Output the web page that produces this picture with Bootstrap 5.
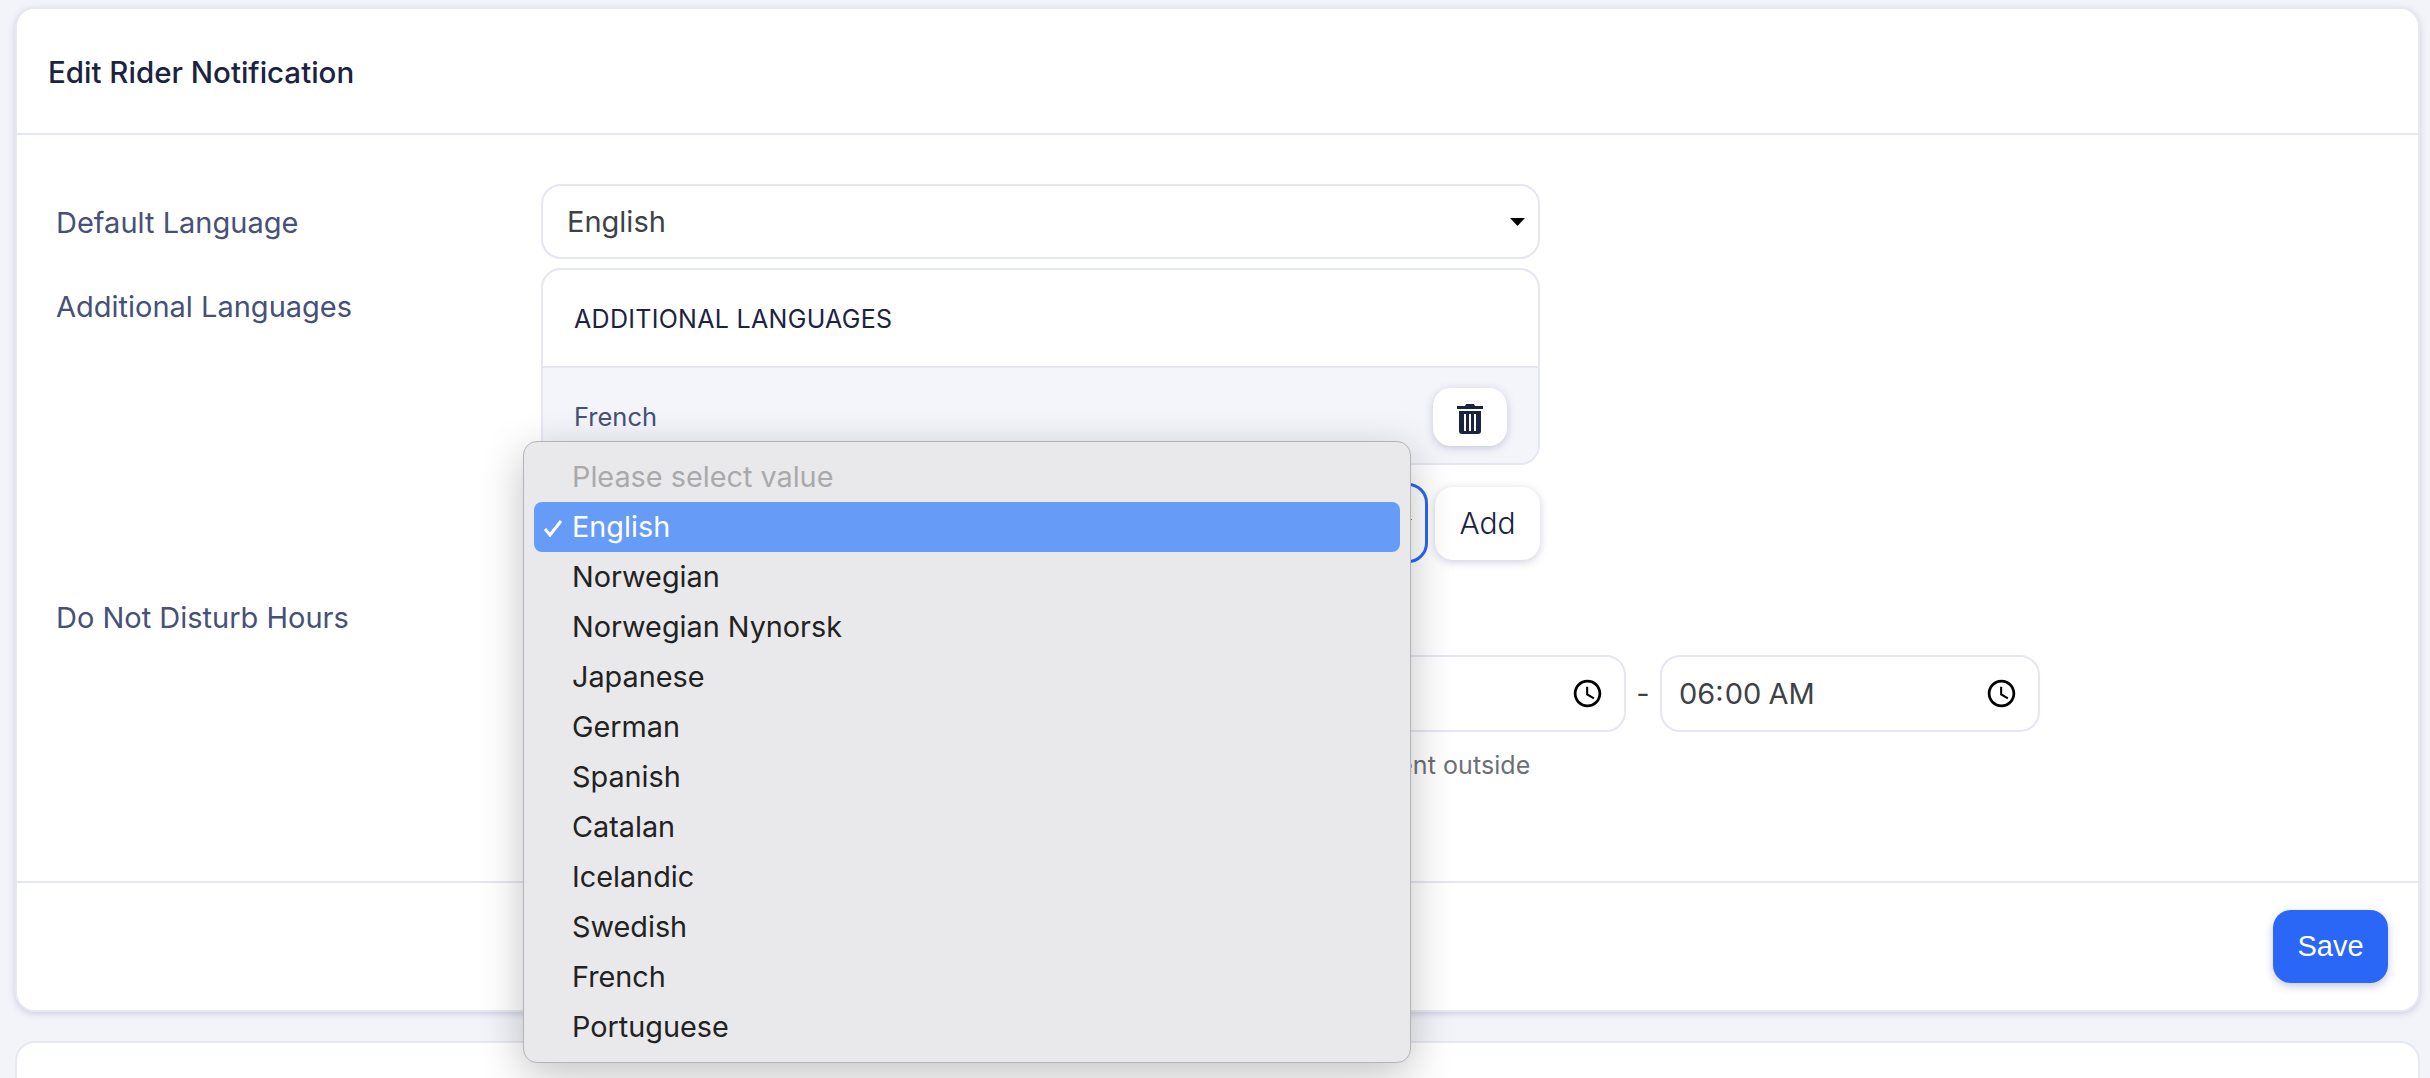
<!DOCTYPE html>
<html>
<head>
  <title>Edit Rider Notification</title>
  <link href="https://cdn.jsdelivr.net/npm/bootstrap@5.3.3/dist/css/bootstrap.min.css" rel="stylesheet">
  <style>
    html, body { height: 100%; overflow: hidden; }
    body {
      background-color: #f3f4f9;
      font-family: Inter, "Liberation Sans", sans-serif;
      padding: 7px 10px 0 15px;
    }
    .edit-card {
      height: 1005px;
      border: 2px solid #e6e8f2;
      border-radius: 20px;
      box-shadow: 0 2px 6px rgba(90, 90, 150, .25);
    }
    .edit-card .card-header {
      height: 126px;
      padding: 3px 0 0 31px;
      background: #fff;
      border-bottom: 2px solid #e4e7f2;
      font-size: 29.5px;
      font-weight: 500;
      color: #1c2340;
      border-radius: 18px 18px 0 0;
    }
    .edit-card .card-body { padding: 49px 0 0 39px; }
    .edit-card .card-footer {
      height: 129px;
      padding: 0 30px 0 0;
      background: #fff;
      border-top: 2px solid #e4e7f2;
      border-radius: 0 0 18px 18px;
    }
    .field-label { width: 485px; flex: none; font-size: 29px; color: #475077; }
    .first-label { padding-top: 3px; }
    .second-label { margin-top: 26px; }
    .field-box { width: 999px; flex: none; }
    .tall-input {
      height: 75px;
      font-size: 29px;
      color: #3e4246;
      border: 2px solid #e4e7f2;
      border-radius: 20px;
      padding: 0 24px;
    }
    .form-select.tall-input {
      background-image: url("data:image/svg+xml,%3csvg xmlns='http://www.w3.org/2000/svg' viewBox='0 0 15 8'%3e%3cpath d='M0 0h15L7.5 8z' fill='%23000'/%3e%3c/svg%3e");
      background-size: 15px 8px;
      background-position: right 13px center;
    }
    .lang-panel {
      border: 2px solid #e4e7f2;
      border-radius: 20px;
      margin-top: 9px;
      height: 197px;
      overflow: hidden;
    }
    .lang-panel-head {
      height: 98px;
      padding: 3px 0 0 31px;
      font-size: 25px;
      letter-spacing: .3px;
      color: #1c2340;
      border-bottom: 2px solid #e4e7f2;
    }
    .lang-panel-row {
      height: 97px;
      padding: 0 31px 0 31px;
      background: #f4f5fa;
      font-size: 25.5px;
      color: #475077;
    }
    .lang-panel-row span { padding-top: 2px; }
    .white-btn {
      background: #fff;
      border: 0;
      border-radius: 18px;
      color: #1c2340;
      font-family: Inter, "Liberation Sans", sans-serif;
      font-size: 30px;
      font-weight: 300;
      box-shadow: 0 2px 8px rgba(80, 80, 140, .28);
    }
    .trash-btn { width: 74px; height: 58px; padding: 0; }
    .add-row { position: relative; margin-top: 18px; height: 80px; }
    .add-row .form-select { height: 80px; width: 888px; border: 3px solid #2b67f6; }
    .add-btn { width: 105px; height: 73px; padding: 0; margin-left: 7px; }
    .dnd-row { margin-top: 38px; }
    .dnd-label { line-height: 33px; }
    .time-row { padding-top: 54px; width: 1499px; }
    .time-input { width: 380px; height: 77px; flex: none; padding-left: 17px; }
    .time-input::-webkit-calendar-picker-indicator { width: 33px; height: 33px; margin-right: -4px; padding: 0; opacity: 1; }
    .time-dash { width: 34px; flex: none; text-align: center; font-size: 29px; color: #3e4246; }
    .help-line { font-size: 25px; letter-spacing: .07px; color: #6c6f75; margin-top: 15px; white-space: nowrap; }
    .save-btn {
      width: 115px;
      height: 73px;
      padding: 0;
      background: #2b67f6;
      border: 0;
      border-radius: 18px;
      font-family: "Liberation Sans", sans-serif;
      font-size: 29px;
      box-shadow: 0 3px 8px rgba(60, 70, 140, .3);
    }
    .next-card { height: 60px; margin-top: 29px; border: 2px solid #e6e8f2; border-radius: 20px; }
    .native-menu {
      position: absolute;
      left: -18px;
      top: -42px;
      width: 888px;
      height: 622px;
      padding: 10px 10px;
      background: #e9e9eb;
      border: 1px solid #b4b4b8;
      border-radius: 14px;
      box-shadow: 0 12px 44px rgba(0, 0, 0, .24);
      z-index: 10;
    }
    .native-menu .dropdown-item {
      height: 50px;
      padding: 0 0 0 38px;
      font-size: 28.8px;
      color: #222;
      border-radius: 8px;
      position: relative;
    }
    .native-menu .dropdown-item.disabled { color: #a9a9ac; }
    .native-menu .dropdown-item.active { background: #669cf7; color: #fff; }
    .tick { position: absolute; left: 9px; top: 17px; }
  </style>
</head>
<body>

<div class="card edit-card">
  <div class="card-header d-flex align-items-center">Edit Rider Notification</div>
  <div class="card-body">
    <div class="d-flex align-items-center">
      <label class="field-label first-label" for="defaultLang">Default Language</label>
      <div class="field-box">
        <select class="form-select tall-input" id="defaultLang">
          <option>English</option>
        </select>
      </div>
    </div>

    <div class="d-flex">
      <label class="field-label second-label">Additional Languages</label>
      <div class="field-box">
        <div class="lang-panel">
          <div class="lang-panel-head d-flex align-items-center">ADDITIONAL LANGUAGES</div>
          <div class="lang-panel-row d-flex align-items-center justify-content-between">
            <span>French</span>
            <button class="btn white-btn trash-btn" type="button">
              <svg width="26" height="30" viewBox="0 0 26 30" fill="#1c2340">
                <path d="M9 0h8l1 2h8v3H0V2h8z"/>
                <path d="M2 7h22v20a3 3 0 0 1-3 3H5a3 3 0 0 1-3-3z"/>
                <path d="M7 10h2v17H7zM12 10h2v17h-2zM17 10h2v17h-2z" fill="#fff"/>
              </svg>
            </button>
          </div>
        </div>
        <div class="add-row d-flex align-items-center">
          <select class="form-select tall-input">
            <option>English</option>
          </select>
          <button class="btn white-btn add-btn" type="button">Add</button>
          <div class="dropdown-menu show native-menu">
            <div class="dropdown-item disabled d-flex align-items-center">Please select value</div>
            <div class="dropdown-item active d-flex align-items-center">
              <svg class="tick" width="20" height="18" viewBox="0 0 20 18"><path d="M2 10l5 6L18 2" fill="none" stroke="#fff" stroke-width="3"/></svg>
              English
            </div>
            <div class="dropdown-item d-flex align-items-center">Norwegian</div>
            <div class="dropdown-item d-flex align-items-center">Norwegian Nynorsk</div>
            <div class="dropdown-item d-flex align-items-center">Japanese</div>
            <div class="dropdown-item d-flex align-items-center">German</div>
            <div class="dropdown-item d-flex align-items-center">Spanish</div>
            <div class="dropdown-item d-flex align-items-center">Catalan</div>
            <div class="dropdown-item d-flex align-items-center">Icelandic</div>
            <div class="dropdown-item d-flex align-items-center">Swedish</div>
            <div class="dropdown-item d-flex align-items-center">French</div>
            <div class="dropdown-item d-flex align-items-center">Portuguese</div>
          </div>
        </div>
      </div>
    </div>

    <div class="d-flex dnd-row">
      <label class="field-label dnd-label">Do Not Disturb Hours</label>
      <div>
        <div class="time-row d-flex align-items-center">
          <select class="form-select tall-input flex-grow-1 me-3">
            <option>Local time</option>
          </select>
          <input class="form-control tall-input time-input" type="time" value="22:00">
          <span class="time-dash">-</span>
          <input class="form-control tall-input time-input" type="time" value="06:00">
        </div>
        <div class="help-line">Rider notifications will only be delivered during these hours and not be sent outside</div>
      </div>
    </div>
  </div>
  <div class="card-footer d-flex align-items-center justify-content-end">
    <button class="btn btn-primary save-btn" type="button">Save</button>
  </div>
</div>

<div class="card next-card"></div>

<script src="https://cdn.jsdelivr.net/npm/bootstrap@5.3.3/dist/js/bootstrap.bundle.min.js"></script>
</body>
</html>
